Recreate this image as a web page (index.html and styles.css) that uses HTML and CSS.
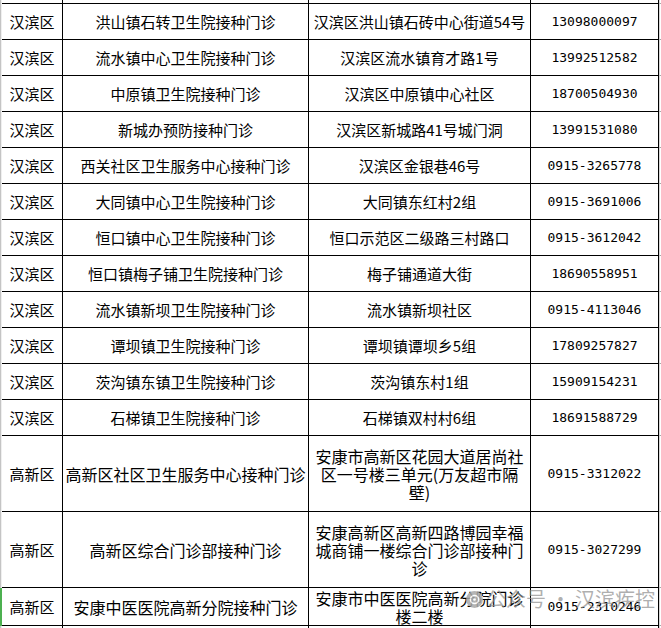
FILE: index.html
```html
<!DOCTYPE html>
<html lang="zh-CN">
<head>
<meta charset="utf-8">
<title>接种门诊</title>
<link rel="stylesheet" href="styles.css">
</head>
<body>
<div class="sheet">
  <div class="grid">
    <div class="edge"></div><div class="c cut"></div><div class="c cut"></div><div class="c cut"></div><div class="c cut"></div><div class="tail cut"></div>

    <div class="edge"></div><div class="c">汉滨区</div><div class="c">洪山镇石转卫生院接种门诊</div><div class="c">汉滨区洪山镇石砖中心街道54号</div><div class="c tel">13098000097</div><div class="tail"></div>
    <div class="edge"></div><div class="c">汉滨区</div><div class="c">流水镇中心卫生院接种门诊</div><div class="c">汉滨区流水镇育才路1号</div><div class="c tel">13992512582</div><div class="tail"></div>
    <div class="edge"></div><div class="c">汉滨区</div><div class="c">中原镇卫生院接种门诊</div><div class="c">汉滨区中原镇中心社区</div><div class="c tel">18700504930</div><div class="tail"></div>
    <div class="edge"></div><div class="c">汉滨区</div><div class="c">新城办预防接种门诊</div><div class="c">汉滨区新城路41号城门洞</div><div class="c tel">13991531080</div><div class="tail"></div>
    <div class="edge"></div><div class="c">汉滨区</div><div class="c">西关社区卫生服务中心接种门诊</div><div class="c">汉滨区金银巷46号</div><div class="c tel">0915-3265778</div><div class="tail"></div>
    <div class="edge"></div><div class="c">汉滨区</div><div class="c">大同镇中心卫生院接种门诊</div><div class="c">大同镇东红村2组</div><div class="c tel">0915-3691006</div><div class="tail"></div>
    <div class="edge"></div><div class="c">汉滨区</div><div class="c">恒口镇中心卫生院接种门诊</div><div class="c">恒口示范区二级路三村路口</div><div class="c tel">0915-3612042</div><div class="tail"></div>
    <div class="edge"></div><div class="c">汉滨区</div><div class="c">恒口镇梅子铺卫生院接种门诊</div><div class="c">梅子铺通道大街</div><div class="c tel">18690558951</div><div class="tail"></div>
    <div class="edge"></div><div class="c">汉滨区</div><div class="c">流水镇新坝卫生院接种门诊</div><div class="c">流水镇新坝社区</div><div class="c tel">0915-4113046</div><div class="tail"></div>
    <div class="edge"></div><div class="c">汉滨区</div><div class="c">谭坝镇卫生院接种门诊</div><div class="c">谭坝镇谭坝乡5组</div><div class="c tel">17809257827</div><div class="tail"></div>
    <div class="edge"></div><div class="c">汉滨区</div><div class="c">茨沟镇东镇卫生院接种门诊</div><div class="c">茨沟镇东村1组</div><div class="c tel">15909154231</div><div class="tail"></div>
    <div class="edge"></div><div class="c">汉滨区</div><div class="c">石梯镇卫生院接种门诊</div><div class="c">石梯镇双村村6组</div><div class="c tel">18691588729</div><div class="tail"></div>

    <div class="edge"></div><div class="c">高新区</div><div class="c big">高新区社区卫生服务中心接种门诊</div><div class="c big">安康市高新区花园大道居尚社<br>区一号楼三单元(万友超市隔<br>壁)</div><div class="c tel">0915-3312022</div><div class="tail"></div>
    <div class="edge"></div><div class="c">高新区</div><div class="c big">高新区综合门诊部接种门诊</div><div class="c big">安康高新区高新四路博园幸福<br>城商铺一楼综合门诊部接种门<br>诊</div><div class="c tel">0915-3027299</div><div class="tail"></div>
    <div class="edge sel"></div><div class="c">高新区</div><div class="c big">安康中医医院高新分院接种门诊</div><div class="c big">安康市中医医院高新分院门诊<br>楼二楼</div><div class="c tel">0915-2310246</div><div class="tail"></div>

    <div class="edge"></div><div class="c cut"></div><div class="c cut"></div><div class="c cut"></div><div class="c cut"></div><div class="tail cut"></div>
  </div>

  <div class="mark">
    <svg class="mark-icon" width="17" height="17" viewBox="0 0 17 17">
      <circle cx="8.5" cy="8.5" r="8.5" fill="#a9a9a9"/>
      <circle cx="8.5" cy="8.5" r="4" fill="none" stroke="#fff" stroke-width="1.6"/>
      <circle cx="8.5" cy="8.5" r="1.3" fill="#fff"/>
    </svg>
    <span>公众号 · 汉滨疾控</span>
  </div>
</div>
</body>
</html>
```

FILE: styles.css
```css
html, body {
  margin: 0;
  padding: 0;
  background: #fff;
}

.sheet {
  position: relative;
  width: 661px;
  height: 628px;
  overflow: hidden;
  font-family: "Noto Sans CJK SC", "Noto Sans", sans-serif;
  color: #000;
}

.grid {
  display: grid;
  grid-template-columns: 2px 61px 246px 222px 128px 2px;
  grid-template-rows: 4px repeat(12, 36px) 76px 76px 38px 20px;
}

.edge {
  box-sizing: border-box;
  border-left: 1px solid #c4c4c4;
  background: #efefef;
}

.edge.sel {
  border-left: 0;
  background: #4cb050;
}

.c {
  box-sizing: border-box;
  border-right: 1px solid #000;
  border-bottom: 1px solid #000;
  display: flex;
  align-items: center;
  justify-content: center;
  text-align: center;
  padding: 1px 2px 0;
  font-size: 15px;
  line-height: 18px;
  white-space: nowrap;
}

.c.big {
  font-size: 16px;
  line-height: 18px;
}

.c.tel {
  font-family: "DejaVu Sans Mono", "Liberation Mono", monospace;
  font-size: 13px;
}

.tail {
  box-sizing: border-box;
  border-bottom: 1px solid #a8a8a8;
  border-left: 1px solid #d8d8d8;
}

.mark {
  position: absolute;
  left: 466px;
  top: 587px;
  display: flex;
  align-items: center;
  gap: 3px;
  color: rgba(140, 140, 140, 0.7);
  font-family: "Noto Sans CJK SC", sans-serif;
  font-size: 20px;
  line-height: 24px;
  white-space: nowrap;
}

.mark-icon {
  opacity: 0.85;
}
```
